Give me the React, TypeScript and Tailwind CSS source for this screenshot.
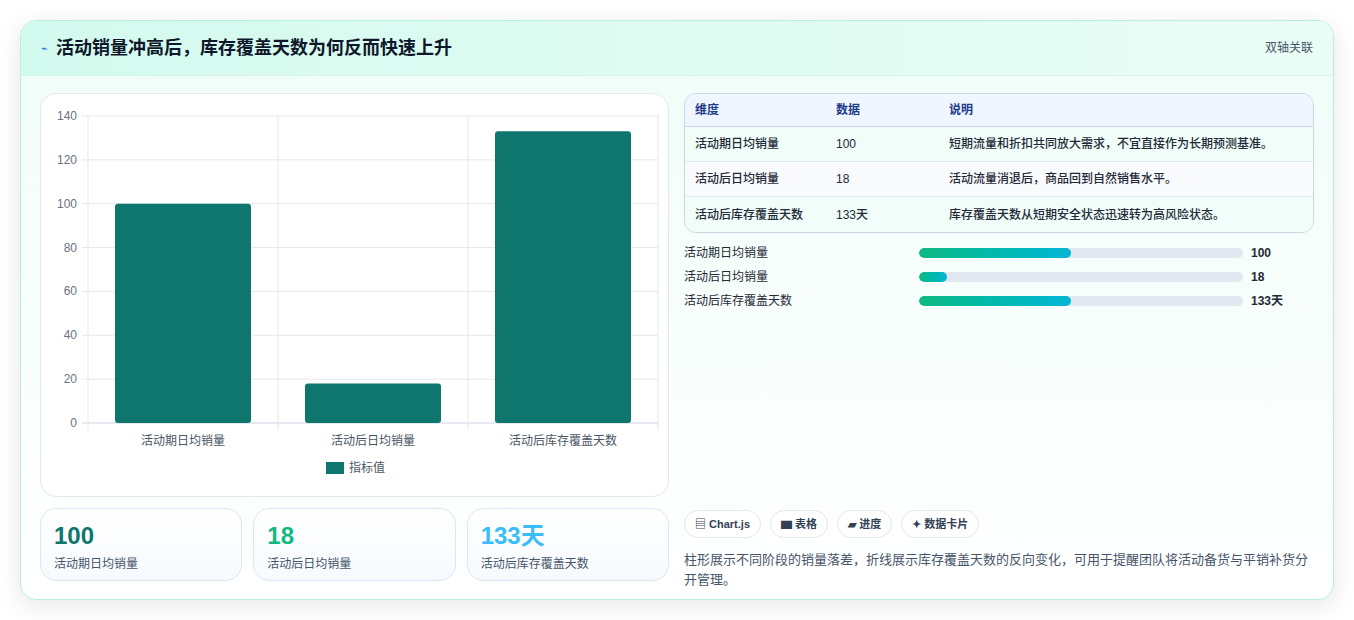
import React from "react";

const rows = [
  { k: "活动期日均销量", v: "100", d: "短期流量和折扣共同放大需求，不宜直接作为长期预测基准。", w: 47 },
  { k: "活动后日均销量", v: "18", d: "活动流量消退后，商品回到自然销售水平。", w: 8.5 },
  { k: "活动后库存覆盖天数", v: "133天", d: "库存覆盖天数从短期安全状态迅速转为高风险状态。", w: 47 },
];

function Chart() {
  const x0 = 47, x1 = 617, y0 = 22, y1 = 329;
  const h = y1 - y0;
  const ticks = [0, 20, 40, 60, 80, 100, 120, 140];
  const vals = [100, 18, 133];
  const labels = ["活动期日均销量", "活动后日均销量", "活动后库存覆盖天数"];
  const cw = (x1 - x0) / 3;
  return (
    <svg width="629" height="403" className="block" style={{ fontFamily: "'Liberation Sans','Noto Sans CJK SC',sans-serif" }}>
      {ticks.map((t) => {
        const y = y1 - (t / 140) * h;
        return (
          <g key={t}>
            <line x1={x0 - 6} x2={x1} y1={y} y2={y} stroke={t === 0 ? "#cbd5e1" : "#e5e7eb"} />
            <text x={x0 - 11} y={y + 4} textAnchor="end" fontSize="12" fill="#6b7280">{t}</text>
          </g>
        );
      })}
      {[0, 1, 2, 3].map((i) => (
        <line key={i} x1={x0 + i * cw} x2={x0 + i * cw} y1={y0} y2={y1 + 7} stroke="#e5e7eb" />
      ))}
      {vals.map((v, i) => {
        const top = y1 - (v / 140) * h;
        return <rect key={i} x={x0 + i * cw + 27} y={top} width={136} height={y1 - top} rx={3} fill="#0f766e" />;
      })}
      {labels.map((l, i) => (
        <text key={l} x={x0 + i * cw + cw / 2} y={351} textAnchor="middle" fontSize="12" fill="#4b5563">{l}</text>
      ))}
      <rect x={285} y={368} width={18} height={12} fill="#0f766e" />
      <text x={308} y={378} fontSize="12" fill="#4b5563">指标值</text>
    </svg>
  );
}

export default function App() {
  return (
    <div className="w-[1354px] h-[620px] bg-white p-5" style={{ fontFamily: "'Liberation Sans','Noto Sans CJK SC',sans-serif" }}>
      <div className="h-[580px] rounded-2xl border border-[#b7eedd] overflow-hidden shadow-[0_6px_24px_rgba(15,23,42,0.10)] bg-gradient-to-b from-[#effdf8] to-white">
        <div className="h-[55px] flex items-center justify-between px-5 bg-gradient-to-r from-[#d3faee] to-[#eafdf6] border-b border-[#d7f3ea]">
          <div className="flex items-center gap-2">
            <span className="text-[11px] text-[#2563eb]">⌁</span>
            <span className="text-[18px] font-bold text-[#0f172a]">活动销量冲高后，库存覆盖天数为何反而快速上升</span>
          </div>
          <span className="text-[12px] text-[#475569]">双轴关联</span>
        </div>
        <div className="flex gap-[15px] px-[19px] pt-[17px]">
          <div className="w-[629px] flex flex-col gap-[11px]">
            <div className="h-[404px] rounded-2xl border border-[#e2e8f0] bg-white">
              <Chart />
            </div>
            <div className="grid grid-cols-3 gap-[11px]">
              {[
                ["100", "text-[#0f766e]", "活动期日均销量"],
                ["18", "text-[#10b981]", "活动后日均销量"],
                ["133天", "text-[#38bdf8]", "活动后库存覆盖天数"],
              ].map(([v, c, l]) => (
                <div key={l} className="h-[73px] rounded-2xl border border-[#dbe7f3] bg-gradient-to-b from-white to-[#f6fafe] px-[13px] pt-[12px]">
                  <div className={`text-[24px] font-bold leading-[30px] ${c}`}>{v}</div>
                  <div className="text-[12px] text-[#475569] mt-[4px]">{l}</div>
                </div>
              ))}
            </div>
          </div>
          <div className="flex-1 flex flex-col">
            <div className="rounded-xl border border-[#cbd5e1] overflow-hidden text-[12px]">
              <div className="h-[33px] flex items-center bg-[#eff6ff] border-b border-[#cbd5e1] font-bold text-[#1e3a8a]">
                <div className="w-[151px] pl-[10px]">维度</div>
                <div className="w-[113px]">数据</div>
                <div>说明</div>
              </div>
              {rows.map((r, i) => (
                <div key={r.k} className={`h-[35px] flex items-center text-[#1f2937] font-medium ${i < 2 ? "border-b border-[#e2e8f0]" : ""} ${i === 1 ? "bg-[#f8fafc]" : "bg-[#f0fdf8]"}`}>
                  <div className="w-[151px] pl-[10px]">{r.k}</div>
                  <div className="w-[113px]">{r.v}</div>
                  <div>{r.d}</div>
                </div>
              ))}
            </div>
            <div className="flex flex-col gap-[10px] mt-[13px]">
              {rows.map((r) => (
                <div key={r.k} className="h-[14px] flex items-center text-[12px] text-[#1f2937]">
                  <div className="w-[235px]">{r.k}</div>
                  <div className="w-[324px] h-[10px] rounded-full bg-[#e2e8f0] overflow-hidden">
                    <div className="h-full rounded-full bg-gradient-to-r from-[#10b981] to-[#06b6d4]" style={{ width: `${r.w}%` }} />
                  </div>
                  <div className="ml-[8px] font-bold">{r.v}</div>
                </div>
              ))}
            </div>
            <div className="flex gap-[9px] mt-[202px]">
              {["▤ Chart.js", "▆ 表格", "▰ 进度", "✦ 数据卡片"].map((c) => (
                <span key={c} className="h-[28px] px-[10px] rounded-full border border-[#e2e8f0] bg-white flex items-center text-[11px] font-bold text-[#334155]">{c}</span>
              ))}
            </div>
            <p className="mt-[12px] text-[13px] leading-[20px] text-[#475569]">
              柱形展示不同阶段的销量落差，折线展示库存覆盖天数的反向变化，可用于提醒团队将活动备货与平销补货分开管理。
            </p>
          </div>
        </div>
      </div>
    </div>
  );
}
